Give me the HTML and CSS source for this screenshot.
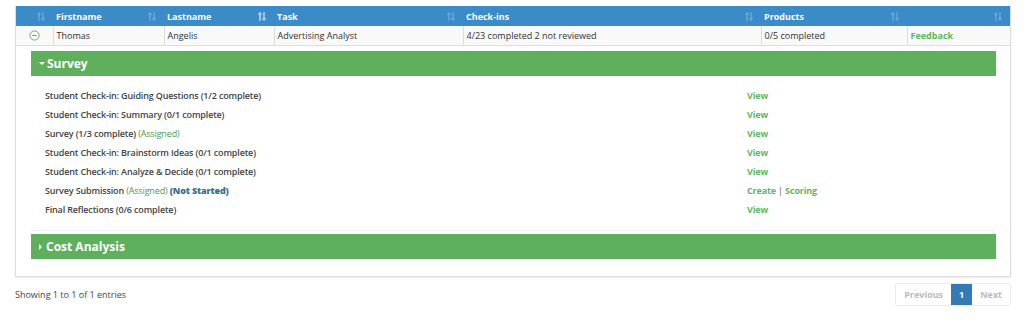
FILE: index.html
```html
<!DOCTYPE html>
<html lang="en">
<head>
    <meta charset="UTF-8">
    <title>Student Progress</title>
    <link rel="stylesheet" href="styles.css">
</head>
<body>
    <div class="table-box">
        <table class="grid">
            <colgroup>
                <col class="c-ctl"><col class="c-first"><col class="c-last"><col class="c-task">
                <col class="c-check"><col class="c-prod"><col class="c-act">
            </colgroup>
            <thead>
                <tr>
                    <th><svg class="sort" viewBox="0 0 8 9"><path d="M2 9V1M0.5 2.8L2 1L3.5 2.8M6 0V8M4.5 6.2L6 8L7.5 6.2"/></svg></th>
                    <th>Firstname<svg class="sort" viewBox="0 0 8 9"><path d="M2 9V1M0.5 2.8L2 1L3.5 2.8M6 0V8M4.5 6.2L6 8L7.5 6.2"/></svg></th>
                    <th>Lastname<svg class="sort sorted" viewBox="0 0 8 9"><path d="M2 9V1M0.5 2.8L2 1L3.5 2.8M6 0V8M4.5 6.2L6 8L7.5 6.2"/></svg></th>
                    <th>Task<svg class="sort" viewBox="0 0 8 9"><path d="M2 9V1M0.5 2.8L2 1L3.5 2.8M6 0V8M4.5 6.2L6 8L7.5 6.2"/></svg></th>
                    <th>Check-ins<svg class="sort" viewBox="0 0 8 9"><path d="M2 9V1M0.5 2.8L2 1L3.5 2.8M6 0V8M4.5 6.2L6 8L7.5 6.2"/></svg></th>
                    <th>Products<svg class="sort" viewBox="0 0 8 9"><path d="M2 9V1M0.5 2.8L2 1L3.5 2.8M6 0V8M4.5 6.2L6 8L7.5 6.2"/></svg></th>
                    <th><svg class="sort" viewBox="0 0 8 9"><path d="M2 9V1M0.5 2.8L2 1L3.5 2.8M6 0V8M4.5 6.2L6 8L7.5 6.2"/></svg></th>
                </tr>
            </thead>
            <tbody>
                <tr class="row">
                    <td class="ctl">
                        <svg width="11" height="11" viewBox="0 0 11 11"><circle cx="5.5" cy="5.5" r="4.6" fill="none" stroke="#5cb85c" stroke-width="1"/><line x1="3.2" y1="5.5" x2="7.8" y2="5.5" stroke="#5cb85c" stroke-width="1"/></svg>
                    </td>
                    <td>Thomas</td>
                    <td>Angelis</td>
                    <td>Advertising Analyst</td>
                    <td>4/23 completed 2 not reviewed</td>
                    <td>0/5 completed</td>
                    <td><a class="link" href="#">Feedback</a></td>
                </tr>
                <tr class="detail">
                    <td colspan="7">
                        <div class="panel">
                            <div class="panel-head"><span class="caret down"></span>Survey</div>
                            <ul class="items">
                                <li><span>Student Check-in: Guiding Questions (1/2 complete)</span><span><a class="link" href="#">View</a></span></li>
                                <li><span>Student Check-in: Summary (0/1 complete)</span><span><a class="link" href="#">View</a></span></li>
                                <li><span>Survey (1/3 complete) <em class="assigned">(Assigned)</em></span><span><a class="link" href="#">View</a></span></li>
                                <li><span>Student Check-in: Brainstorm Ideas (0/1 complete)</span><span><a class="link" href="#">View</a></span></li>
                                <li><span>Student Check-in: Analyze &amp; Decide (0/1 complete)</span><span><a class="link" href="#">View</a></span></li>
                                <li><span>Survey Submission <em class="assigned">(Assigned)</em> <strong class="status">(Not Started)</strong></span><span><a class="link" href="#">Create</a> <span class="sep">|</span> <a class="link" href="#">Scoring</a></span></li>
                                <li><span>Final Reflections (0/6 complete)</span><span><a class="link" href="#">View</a></span></li>
                            </ul>
                        </div>
                        <div class="panel">
                            <div class="panel-head"><span class="caret right"></span>Cost Analysis</div>
                        </div>
                    </td>
                </tr>
            </tbody>
        </table>
    </div>
    <div class="footer">
        <div class="info">Showing 1 to 1 of 1 entries</div>
        <div class="pager">
            <span class="page disabled">Previous</span>
            <span class="page current">1</span>
            <span class="page disabled">Next</span>
        </div>
    </div>
</body>
</html>
```
FILE: styles.css
```css
body {
    margin: 0;
    padding: 6px 13px 0 15px;
    font-family: "Open Sans", Arial, sans-serif;
    font-size: 9px;
    color: #333;
    background-color: #fff;
}
.table-box {
    border: 1px solid #ddd;
    border-top: none;
    box-shadow: 0 1px 2px rgba(0, 0, 0, 0.08);
}
.grid {
    width: 100%;
    border-collapse: collapse;
    table-layout: fixed;
}
.c-ctl { width: 37px; }
.c-first { width: 111px; }
.c-last { width: 110px; }
.c-task { width: 189px; }
.c-check { width: 298px; }
.c-prod { width: 146px; }
.grid th {
    position: relative;
    height: 20px;
    padding: 0 3px;
    background-color: #3a8bc8;
    color: #fff;
    font-weight: 700;
    text-align: left;
}
.sort {
    position: absolute;
    right: 8px;
    top: 6px;
    width: 8px;
    height: 9px;
    fill: none;
    stroke: rgba(255, 255, 255, 0.25);
    stroke-width: 1.4;
}
.sort.sorted {
    stroke: rgba(255, 255, 255, 0.55);
    stroke-width: 1.8;
}
.row td {
    height: 19px;
    padding: 0 3px;
    background-color: #f9f9f9;
    border: 1px solid #ddd;
    border-top: none;
    white-space: nowrap;
}
.row td.ctl {
    text-align: center;
    padding: 0;
    border-left: none;
}
.row td.ctl svg {
    display: block;
    margin: 0 auto;
}
.row td:last-child {
    border-right: none;
}
.link {
    color: #5cb85c;
    font-weight: 700;
    text-decoration: none;
}
.detail td {
    padding: 5px 14px 17px 15px;
}
.panel-head {
    height: 25px;
    line-height: 25px;
    padding-left: 8px;
    background-color: #5fb05c;
    color: #fff;
    font-size: 12px;
    font-weight: 700;
}
.caret {
    display: inline-block;
    margin-right: 2px;
    vertical-align: middle;
}
.caret.down {
    border-left: 3px solid transparent;
    border-right: 3px solid transparent;
    border-top: 3px solid #fff;
    position: relative;
    top: -1px;
}
.caret.right {
    border-top: 3px solid transparent;
    border-bottom: 3px solid transparent;
    border-left: 3px solid #fff;
    margin-right: 4px;
    position: relative;
    top: -1px;
}
.items {
    list-style: none;
    margin: 0 0 3px 0;
    padding: 10px 0 11px 14px;
    border-bottom: 1px solid #f2f2f2;
}
.items li {
    display: grid;
    grid-template-columns: 702px 1fr;
    line-height: 19px;
    color: #444;
    font-weight: 600;
    letter-spacing: -0.15px;
}
.assigned {
    font-style: normal;
    font-weight: 400;
    color: #4f9a4f;
}
.status {
    color: #31708f;
}
.sep {
    color: #555;
    font-weight: 400;
}
.footer {
    display: flex;
    justify-content: space-between;
    align-items: center;
    margin-top: 6px;
}
.info {
    color: #444;
}
.pager {
    display: flex;
    border: 1px solid #ececec;
    border-radius: 2px;
}
.page {
    height: 21px;
    line-height: 21px;
    padding: 0 8px;
    font-weight: 700;
}
.page.disabled {
    color: #bbb;
}
.page.current {
    background-color: #337ab7;
    color: #fff;
    padding: 0 8px;
}
```
